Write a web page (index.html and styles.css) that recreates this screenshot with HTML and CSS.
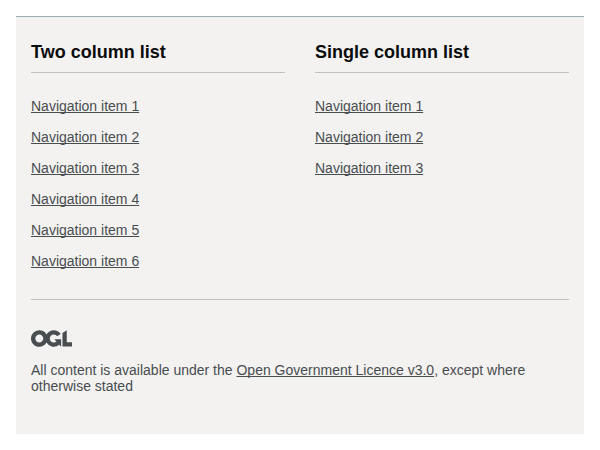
FILE: index.html
```
<!DOCTYPE html>
<html lang="en">
<head>
<meta charset="utf-8">
<title>Footer</title>
<link rel="stylesheet" href="styles.css">
</head>
<body>
<footer class="footer">
  <div class="navigation">
    <div class="section">
      <h2 class="heading">Two column list</h2>
      <ul class="list">
        <li><a class="link" href="#1">Navigation item 1</a></li>
        <li><a class="link" href="#2">Navigation item 2</a></li>
        <li><a class="link" href="#3">Navigation item 3</a></li>
        <li><a class="link" href="#4">Navigation item 4</a></li>
        <li><a class="link" href="#5">Navigation item 5</a></li>
        <li><a class="link" href="#6">Navigation item 6</a></li>
      </ul>
    </div>
    <div class="section">
      <h2 class="heading">Single column list</h2>
      <ul class="list">
        <li><a class="link" href="#1">Navigation item 1</a></li>
        <li><a class="link" href="#2">Navigation item 2</a></li>
        <li><a class="link" href="#3">Navigation item 3</a></li>
      </ul>
    </div>
  </div>
  <hr class="break">
  <div class="meta">
    <svg class="logo" xmlns="http://www.w3.org/2000/svg" viewBox="0 0 483.2 195.7" height="17" width="41"><path fill="currentColor" d="M421.5 142.8V.1l-50.7 32.3v161.1h112.4v-50.7zm-122.3-9.6A47.12 47.12 0 0 1 221 97.8c0-26 21.1-47.1 47.1-47.1 16.7 0 31.4 8.7 39.7 21.8l42.7-27.2A97.63 97.63 0 0 0 268.1 0c-36.5 0-68.3 20.1-85.1 49.7A98 98 0 0 0 97.8 0C43.9 0 0 43.9 0 97.8s43.9 97.8 97.8 97.8c36.5 0 68.3-20.1 85.1-49.7a97.76 97.76 0 0 0 149.6 25.4l19.4 22.2h3v-87.8h-80l24.3 27.5zM97.8 145c-26 0-47.1-21.1-47.1-47.1s21.1-47.1 47.1-47.1 47.1 21.1 47.1 47.1S123.8 145 97.8 145"/></svg>
    <span class="licence">All content is available under the <a class="link" href="#licence">Open Government Licence v3.0</a>, except where otherwise stated</span>
  </div>
</footer>
</body>
</html>
```
FILE: styles.css
```
body {
  margin: 16px;
  background: #fff;
  font-family: "Liberation Sans", Arial, sans-serif;
}
.footer {
  box-sizing: border-box;
  height: 418px;
  padding: 25px 15px;
  border-top: 1px solid #9aacb8;
  background: #f3f2f1;
  color: #484d50;
  font-size: 14px;
  line-height: 16px;
}
.navigation {
  display: grid;
  grid-template-columns: 1fr 1fr;
  gap: 30px;
}
.heading {
  margin: 0 0 25px;
  padding-bottom: 10px;
  border-bottom: 1px solid #bfc1c3;
  color: #0b0c0c;
  font-size: 18px;
  line-height: 20px;
}
.list {
  margin: 0;
  padding: 0;
  list-style: none;
}
.list li {
  margin-bottom: 15px;
}
.link {
  color: inherit;
  text-decoration: underline;
  text-decoration-thickness: 1px;
  text-decoration-skip-ink: none;
  text-underline-offset: 1.4px;
}
.break {
  margin: 15px 0 30px;
  border: 0;
  border-top: 1px solid #bfc1c3;
}
.logo {
  display: block;
  margin-bottom: 15px;
}
.licence {
  display: block;
}
```
